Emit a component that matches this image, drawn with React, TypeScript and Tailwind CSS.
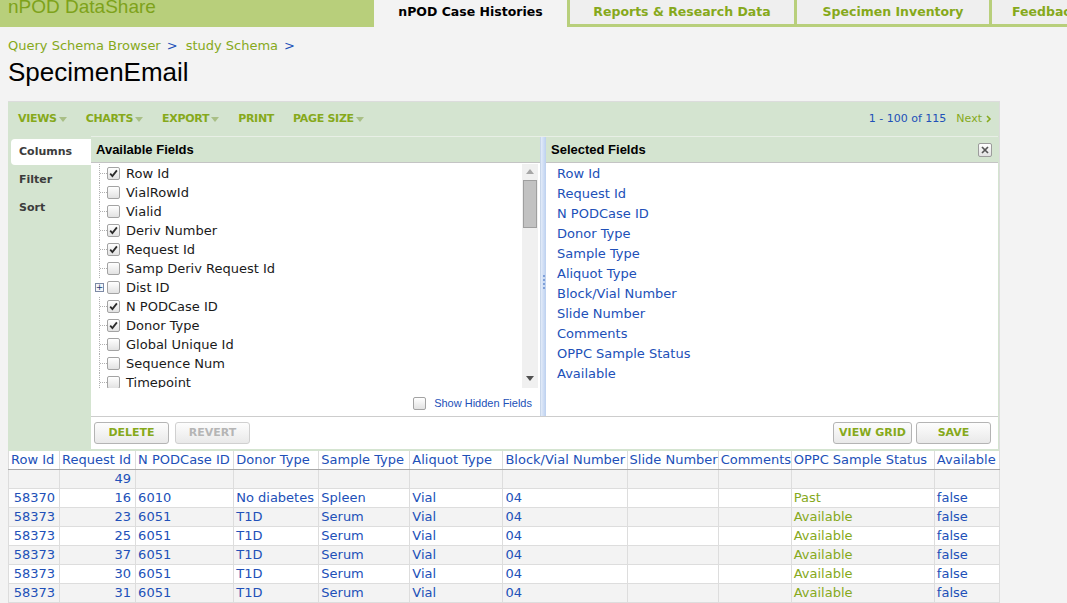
import React from 'react';

const available: { label: string; checked?: boolean; expand?: boolean }[] = [
  { label: 'Row Id', checked: true },
  { label: 'VialRowId' },
  { label: 'Vialid' },
  { label: 'Deriv Number', checked: true },
  { label: 'Request Id', checked: true },
  { label: 'Samp Deriv Request Id' },
  { label: 'Dist ID', expand: true },
  { label: 'N PODCase ID', checked: true },
  { label: 'Donor Type', checked: true },
  { label: 'Global Unique Id' },
  { label: 'Sequence Num' },
  { label: 'Timepoint' },
];

const selected = [
  'Row Id',
  'Request Id',
  'N PODCase ID',
  'Donor Type',
  'Sample Type',
  'Aliquot Type',
  'Block/Vial Number',
  'Slide Number',
  'Comments',
  'OPPC Sample Status',
  'Available',
];

const columns = [
  { name: 'Row Id', w: 'w-[51px]' },
  { name: 'Request Id', w: 'w-[76px]' },
  { name: 'N PODCase ID', w: 'w-[98px]' },
  { name: 'Donor Type', w: 'w-[85px]' },
  { name: 'Sample Type', w: 'w-[91px]' },
  { name: 'Aliquot Type', w: 'w-[93px]' },
  { name: 'Block/Vial Number', w: 'w-[124px]' },
  { name: 'Slide Number', w: 'w-[91px]' },
  { name: 'Comments', w: 'w-[73px]' },
  { name: 'OPPC Sample Status', w: 'w-[143px]' },
  { name: 'Available', w: 'w-[65px]' },
];

const rows = [
  ['', '49', '', '', '', '', '', '', '', '', ''],
  ['58370', '16', '6010', 'No diabetes', 'Spleen', 'Vial', '04', '', '', 'Past', 'false'],
  ['58373', '23', '6051', 'T1D', 'Serum', 'Vial', '04', '', '', 'Available', 'false'],
  ['58373', '25', '6051', 'T1D', 'Serum', 'Vial', '04', '', '', 'Available', 'false'],
  ['58373', '37', '6051', 'T1D', 'Serum', 'Vial', '04', '', '', 'Available', 'false'],
  ['58373', '30', '6051', 'T1D', 'Serum', 'Vial', '04', '', '', 'Available', 'false'],
  ['58373', '31', '6051', 'T1D', 'Serum', 'Vial', '04', '', '', 'Available', 'false'],
];

const Caret = () => (
  <svg width="8" height="5" viewBox="0 0 8 5" className="ml-[2px]">
    <path d="M0 0h8L4 5z" fill="#a9bf86" />
  </svg>
);

const Checkbox = ({ checked }: { checked?: boolean }) => (
  <span className="flex h-[13px] w-[13px] shrink-0 items-center justify-center rounded-[2px] border border-[#a3a3a3] bg-linear-to-b from-white to-[#e2e2e2]">
    {checked && (
      <svg width="9" height="9" viewBox="0 0 9 9">
        <path d="M1.2 4.6l2.2 2.4L7.9 1.4" stroke="#2b2b2b" strokeWidth="1.8" fill="none" />
      </svg>
    )}
  </span>
);

const Button = ({ label, w, disabled }: { label: string; w: string; disabled?: boolean }) => (
  <div
    className={`flex h-[22px] ${w} items-center justify-center rounded-[3px] border bg-linear-to-b from-[#fdfdfd] to-[#e9e9e9] text-[11px] font-bold ${
      disabled ? 'border-[#d0d0d0] text-[#b5b5b5]' : 'border-[#b4b4b4] text-[#86a91b]'
    }`}
  >
    {label}
  </div>
);

const Tab = ({ label, w }: { label: string; w: string }) => (
  <div
    className={`flex h-[27px] ${w} shrink-0 justify-center border-b-[3px] border-l-[3px] border-[#b8cf7b] bg-[#efefef] pt-[4px] text-[12.5px] leading-[15px] font-bold whitespace-nowrap text-[#86a91b]`}
  >
    {label}
  </div>
);

export default function App() {
  return (
    <div className="min-h-[603px] w-full overflow-hidden bg-[#f3f3f3] font-['DejaVu_Sans',sans-serif]">
      {/* top bar */}
      <div className="flex h-[27px] w-[1200px]">
        <div className="w-[374px] shrink-0 overflow-hidden bg-[#b8cf7b]">
          <div className="-mt-[3px] pl-[8px] font-['Liberation_Sans',sans-serif] text-[19px] leading-[19px] text-[#7ea21a]">
            nPOD DataShare
          </div>
        </div>
        <div className="flex h-[27px] w-[193px] shrink-0 justify-center pt-[4px] text-[12.5px] leading-[15px] font-bold text-black">
          nPOD Case Histories
        </div>
        <Tab label="Reports & Research Data" w="w-[227px]" />
        <Tab label="Specimen Inventory" w="w-[195px]" />
        <div className="flex h-[27px] w-[116px] shrink-0 border-b-[3px] border-l-[3px] border-[#b8cf7b] bg-[#efefef] pt-[4px] pl-[20px] text-[12.5px] leading-[15px] font-bold whitespace-nowrap text-[#86a91b]">
          Feedback
        </div>
      </div>

      <div className="px-[8px]">
        <div className="mt-[11px] flex text-[13px] leading-[16px]">
          <span className="text-[#86a91b]">Query Schema Browser</span>
          <span className="ml-[6px] text-[#2150b8]">&gt;</span>
          <span className="ml-[8px] text-[#86a91b]">study Schema</span>
          <span className="ml-[6px] text-[#2150b8]">&gt;</span>
        </div>
        <h1 className="mt-[3px] font-['Liberation_Sans',sans-serif] text-[26px] leading-[30px] text-black">SpecimenEmail</h1>

        {/* grid panel */}
        <div className="mt-[14px] w-[992px] border-t border-r border-[#dcdcdc] bg-[#d4e4d0]">
          {/* toolbar */}
          <div className="flex h-[34px] items-center justify-between pr-[7px] pl-[10px]">
            <div className="flex items-center gap-[19px] text-[11px] font-bold tracking-[-0.3px] text-[#86a91b]">
              <span className="flex items-center">VIEWS<Caret /></span>
              <span className="flex items-center">CHARTS<Caret /></span>
              <span className="flex items-center">EXPORT<Caret /></span>
              <span>PRINT</span>
              <span className="flex items-center">PAGE SIZE<Caret /></span>
            </div>
            <div className="flex items-center text-[11px]">
              <span className="text-[#2150b8]">1 - 100 of 115</span>
              <span className="ml-[10px] flex items-center text-[#86a91b]">
                Next
                <svg width="6" height="8" viewBox="0 0 6 8" className="ml-[4px]">
                  <path d="M1 1l3 3-3 3" stroke="#86a91b" strokeWidth="1.6" fill="none" />
                </svg>
              </span>
            </div>
          </div>

          {/* customize view */}
          <div className="flex pb-[2px]">
            <div className="w-[83px] shrink-0 pt-[3px] text-[11px] font-bold text-[#3c3c3c]">
              <div className="ml-[3px] flex h-[26px] items-center rounded-l-[4px] bg-white pl-[8px]">Columns</div>
              <div className="mt-[1px] flex h-[28px] items-center pl-[11px]">Filter</div>
              <div className="flex h-[28px] items-center pl-[11px]">Sort</div>
            </div>

            <div className="mr-[1px] flex flex-1 flex-col border-t border-[#e8efe6]">
              <div className="flex h-[279px]">
                {/* available */}
                <div className="flex w-[449px] shrink-0 flex-col">
                  <div className="flex h-[26px] items-center border-b border-[#c4c4c4] pl-[5px] font-['Liberation_Sans',sans-serif] text-[13px] font-bold text-black">
                    Available Fields
                  </div>
                  <div className="flex flex-1 flex-col bg-white">
                    <div className="flex h-[225px]">
                      <div className="flex-1 overflow-hidden pt-[1px]">
                        {available.map((f) => (
                          <div key={f.label} className="flex h-[19px] items-center text-[13px] text-[#1a1a1a]">
                            {f.expand ? (
                              <div className="ml-[4px] flex h-full w-[12px] items-center">
                                <span className="flex h-[9px] w-[9px] items-center justify-center border border-[#7d8aa5] bg-[#f4f6fa] text-[9px] leading-none text-[#233b72]">
                                  +
                                </span>
                              </div>
                            ) : (
                              <div className="ml-[8px] flex h-full w-[8px] items-center border-l border-dotted border-[#b0b0b0]">
                                <div className="w-full border-t border-dotted border-[#b0b0b0]" />
                              </div>
                            )}
                            <Checkbox checked={f.checked} />
                            <span className="ml-[6px] whitespace-nowrap">{f.label}</span>
                          </div>
                        ))}
                      </div>
                      <div className="mt-[1px] mr-[2px] flex w-[16px] flex-col items-center bg-[#f0f0f0]">
                        <svg width="8" height="5" viewBox="0 0 8 5" className="mt-[5px]">
                          <path d="M0 5h8L4 0z" fill="#a6a6a6" />
                        </svg>
                        <div className="mt-[6px] h-[48px] w-[14px] border border-[#9f9f9f] bg-[#c2c2c2]" />
                        <div className="flex-1" />
                        <svg width="8" height="5" viewBox="0 0 8 5" className="mb-[7px]">
                          <path d="M0 0h8L4 5z" fill="#505050" />
                        </svg>
                      </div>
                    </div>
                    <div className="flex flex-1 items-center justify-end pt-[3px] pr-[8px]">
                      <Checkbox />
                      <span className="ml-[8px] font-['Liberation_Sans',sans-serif] text-[11px] text-[#2150b8]">Show Hidden Fields</span>
                    </div>
                  </div>
                </div>

                {/* splitter */}
                <div className="flex w-[6px] shrink-0 flex-col items-center justify-center border-l border-[#c8d6ea] bg-linear-to-r from-[#e2ebf9] to-[#bcd0ef]">
                  <div className="mt-[10px] h-[14px] w-[2px] border-l-2 border-dotted border-[#7fa0d8]" />
                </div>

                {/* selected */}
                <div className="flex flex-1 flex-col">
                  <div className="flex h-[26px] items-center justify-between border-b border-[#c4c4c4] pr-[6px] pl-[5px] font-['Liberation_Sans',sans-serif] text-[13px] font-bold text-black">
                    Selected Fields
                    <span className="flex h-[14px] w-[14px] items-center justify-center rounded-[2px] border border-[#9c9c9c] bg-linear-to-b from-white to-[#e2e2e2]">
                      <svg width="8" height="8" viewBox="0 0 8 8">
                        <path d="M1 1l6 6M7 1L1 7" stroke="#555" strokeWidth="1.7" />
                      </svg>
                    </span>
                  </div>
                  <div className="flex-1 bg-white pt-[1px] pl-[11px]">
                    {selected.map((s) => (
                      <div key={s} className="flex h-[20px] items-center text-[13px] text-[#2150b8]">
                        {s}
                      </div>
                    ))}
                  </div>
                </div>
              </div>

              {/* buttons */}
              <div className="flex h-[33px] items-center justify-between border-t border-[#cdcdcd] bg-white pr-[7px] pl-[3px]">
                <div className="flex gap-[6px]">
                  <Button label="DELETE" w="w-[75px]" />
                  <Button label="REVERT" w="w-[75px]" disabled />
                </div>
                <div className="flex gap-[4px]">
                  <Button label="VIEW GRID" w="w-[79px]" />
                  <Button label="SAVE" w="w-[75px]" />
                </div>
              </div>
            </div>
          </div>
        </div>

        {/* data grid */}
        <table className="w-[992px] table-fixed border-collapse border-r border-l border-[#dcdcdc] bg-white text-[13px] leading-[18px] text-[#2150b8]">
          <thead>
            <tr>
              {columns.map((c) => (
                <th
                  key={c.name}
                  className={`${c.w} h-[18px] border-r border-b border-r-[#dddddd] border-b-[#a8a8a8] pl-[2px] text-left font-normal whitespace-nowrap`}
                >
                  {c.name}
                </th>
              ))}
            </tr>
          </thead>
          <tbody>
            {rows.map((r, i) => (
              <tr key={i} className={i % 2 === 0 ? 'bg-[#f3f3f3]' : 'bg-white'}>
                {r.map((v, j) => (
                  <td
                    key={j}
                    className={`h-[19px] border-r border-b border-[#dddddd] whitespace-nowrap ${
                      j < 2 ? 'pr-[4px] text-right' : 'pl-[2px] text-left'
                    } ${j === 9 ? 'text-[#86a91b]' : ''}`}
                  >
                    {v}
                  </td>
                ))}
              </tr>
            ))}
          </tbody>
        </table>
      </div>
    </div>
  );
}
